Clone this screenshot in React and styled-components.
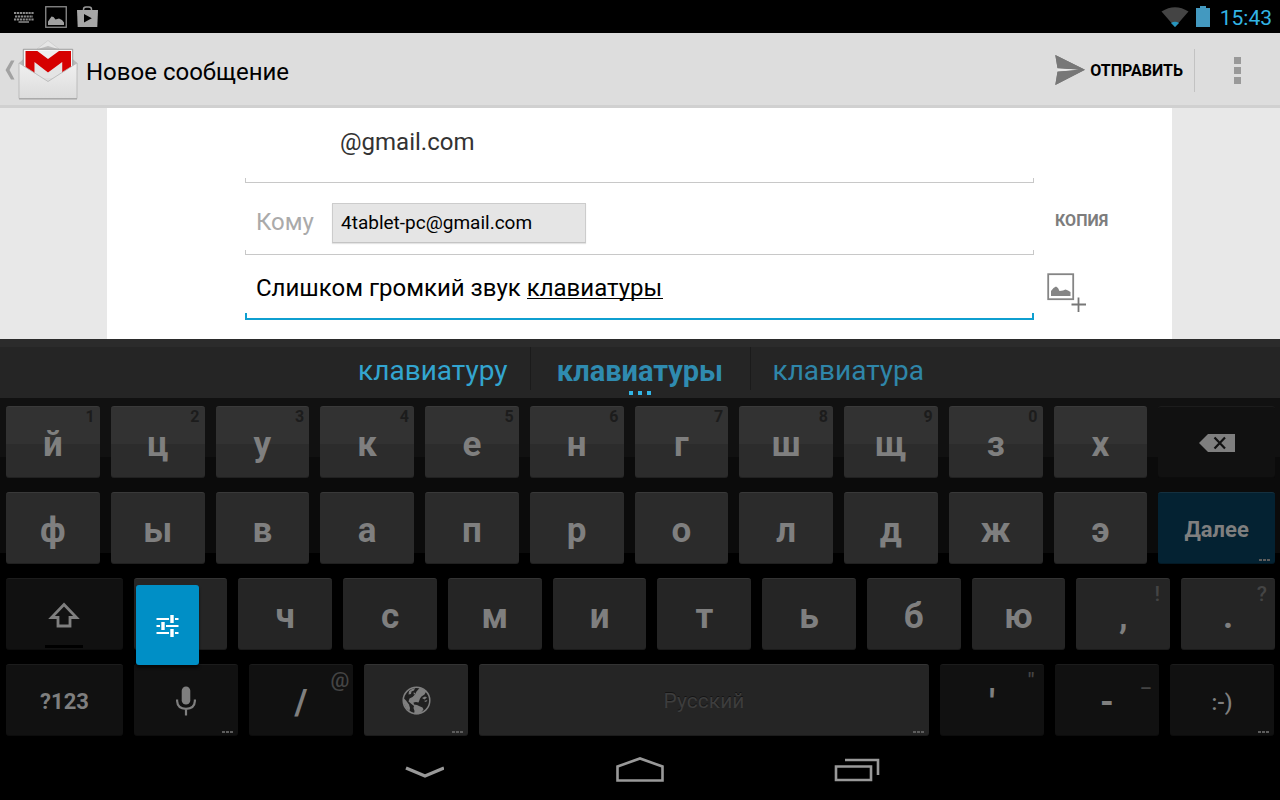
import React, { useState } from "react";
import styled, { createGlobalStyle, css } from "styled-components";

const GlobalStyle = createGlobalStyle`
  *, *::before, *::after { box-sizing: border-box; }
  body {
    margin: 0;
    background: #000;
    font-family: Roboto, "Liberation Sans", sans-serif;
    font-size: 24px;
  }
  button, input, select { font: inherit; color: inherit; }
  svg { display: block; flex: none; }
`;

const Screen = styled.div`
  display: flex;
  flex-direction: column;
  min-height: 100vh;
`;

/* Status bar */

const StatusBar = styled.header`
  display: flex;
  align-items: center;
  justify-content: space-between;
  height: 33px;
  padding: 0 8px 0 13px;
  background: #000;
`;

const StatusGroup = styled.div`
  display: flex;
  align-items: center;
  gap: ${(p) => p.$gap}px;
`;

const Clock = styled.time`
  padding: 2px 0 0 3px;
  color: #33b5e5;
  font-size: 21px;
  line-height: 24px;
`;

/* Action bar */

const ActionBar = styled.div`
  display: flex;
  align-items: center;
  height: 75px;
  padding: 2px 0 0 5px;
  background: #ddd;
  border-bottom: 3px solid #d0d0d0;
`;

const PlainButton = styled.button`
  display: flex;
  align-items: center;
  padding: 0;
  border: 0;
  background: none;
  cursor: pointer;
`;

const UpButton = styled(PlainButton)`
  gap: 3px;
`;

const Title = styled.h1`
  flex: 1;
  margin: 0;
  padding: 4px 0 0 8px;
  color: #000;
  font-size: 24px;
  font-weight: 400;
  line-height: 28px;
`;

const SendButton = styled(PlainButton)`
  gap: 5px;
  height: 43px;
  padding-right: 11px;
  border-right: 1px solid #c2c2c2;
  color: #000;
  font-size: 16px;
  font-weight: 700;
`;

const OverflowButton = styled(PlainButton)`
  flex-direction: column;
  justify-content: center;
  gap: 3px;
  width: 85px;
  height: 43px;
`;

const OverflowDot = styled.span`
  width: 7px;
  height: 7px;
  background: #999;
`;

/* Compose form */

const ComposeArea = styled.main`
  padding: 0 108px 0 107px;
  background: #e8e8e8;
`;

const ComposeCard = styled.form`
  display: grid;
  grid-template-columns: 1fr 138px;
  padding: 0 0 19px 138px;
  background: #fff;
`;

const Field = styled.div`
  position: relative;
  display: flex;
  align-items: center;
  height: ${(p) => p.$height}px;
  padding: 0 11px;

  &::after {
    content: "";
    position: absolute;
    inset: auto 0 0 0;
    height: ${(p) => (p.$focused ? 7 : 5)}px;
    border: solid ${(p) => (p.$focused ? "#0f9fd0" : "#c8c8c8")};
    border-width: ${(p) => (p.$focused ? "0 2px 2px" : "0 1px 1px")};
    pointer-events: none;
  }
`;

const AccountSelect = styled.select`
  width: 100%;
  height: 40px;
  padding: 0 0 0 84px;
  margin-bottom: 8px;
  appearance: none;
  border: 0;
  outline: 0;
  background: none;
  color: #333;
`;

const FieldLabel = styled.label`
  width: 76px;
  padding-top: 6px;
  color: #aaa;
`;

const Chip = styled.span`
  width: 254px;
  height: 40px;
  margin-top: 8px;
  padding: 0 8px;
  border: 1px solid #ccc;
  border-bottom-color: #c4c4c4;
  background: #e5e5e5;
  box-shadow: 0 1px 1px #e4e4e4;
  color: #000;
  font-size: 19px;
  line-height: 38px;
`;

const TextInput = styled.input`
  flex: 1;
  min-width: 0;
  height: 40px;
  padding: 0;
  border: 0;
  outline: 0;
  background: none;
  color: #000;
`;

const ComposingUnderline = styled.span`
  position: absolute;
  left: 282px;
  top: 43px;
  width: 136px;
  height: 1px;
  background: #000;
`;

const SideCell = styled.div`
  display: flex;
  align-items: center;
  padding: ${(p) => p.$drop}px 0 0 ${(p) => p.$inset}px;
`;

const CopyButton = styled(PlainButton)`
  color: #7d7d7d;
  font-size: 16px;
  font-weight: 700;
`;

/* Suggestions */

const SuggestionStrip = styled.div`
  display: grid;
  grid-template-columns: 1fr 221px 1fr;
  height: 59px;
  padding-bottom: 8px;
  background: #252525;
  border-top: 8px solid #2b2b2b;
`;

const Suggestion = styled(PlainButton)`
  position: relative;
  justify-content: ${(p) => p.$align};
  padding: 4px 22px 0;
  border: solid #1b1b1b;
  border-width: ${(p) => (p.$main ? "0 1px" : "0")};
  color: ${(p) => p.$color};
  font-size: ${(p) => (p.$main ? 29 : 28)}px;
  font-weight: ${(p) => (p.$main ? 700 : 400)};
  line-height: 32px;
`;

const MoreSuggestions = styled.span`
  position: absolute;
  inset: auto 0 -5px 0;
  display: flex;
  justify-content: center;
  gap: 5px;

  i { width: 4px; height: 4px; background: #33b5e5; }
`;

/* Keyboard */

const Keyboard = styled.section`
  display: flex;
  flex-direction: column;
  gap: 14px;
  padding: 8px 5px 6px 6px;
  background: linear-gradient(#111 0 59px, #0b0b0b 59px 155px, #000 155px);
`;

const KeyRow = styled.div`
  display: flex;
  gap: 11px;
  height: 72px;

  &:last-child { padding-right: 1px; }
`;

const KeyCell = styled.div`
  position: relative;
  display: flex;
  flex: ${(p) => p.$size} 1 0;
  min-width: 0;
`;

const tones = {
  glossy: css`
    background: linear-gradient(#323232 0 37px, #2c2c2c 37px);
    border-top-color: #3a3a3a;
  `,
  letter: css`
    background: #2b2b2b;
    border-top-color: #393939;
  `,
  low: css`
    background: #252525;
    border-top-color: #333;
  `,
  dark: css`
    background: #111;
    border-top-color: #1c1c1c;
  `,
  action: css`
    background: #042232;
    border-top-color: #14303f;
  `,
};

const sizes = {
  letter: css`font-size: 35px; font-weight: 700; padding-top: 3px;`,
  label: css`font-size: 22px; font-weight: 700; padding-top: 2px;`,
  smiley: css`font-size: 22px; font-weight: 500; padding-top: 3px;`,
  space: css`
    font-size: 21px;
    font-weight: 400;
    color: #3d3d3d;
    text-shadow: 0 -1px 0 #141414;
  `,
};

const KeyButton = styled.button`
  display: flex;
  align-items: center;
  justify-content: center;
  flex: 1;
  min-width: 0;
  padding: 0;
  border: 0 solid;
  border-top-width: 1px;
  border-radius: 3px;
  box-shadow: inset 0 -1px 0 rgba(0, 0, 0, 0.25);
  color: #7f7f7f;
  cursor: pointer;
  ${(p) => tones[p.$tone]}
  ${(p) => sizes[p.$text]}
`;

const DigitHint = styled.span`
  position: absolute;
  top: 2px;
  right: 5px;
  color: #1c1c1c;
  font-size: 16px;
  font-weight: 700;
  line-height: 18px;
  pointer-events: none;
`;

const SymbolHint = styled(DigitHint)`
  right: 0;
  width: 26px;
  color: #444;
  font-size: 21px;
  font-weight: 500;
  line-height: 28px;
  text-align: center;
`;

const MoreMark = styled.span`
  position: absolute;
  right: 5px;
  bottom: 3px;
  display: flex;
  gap: 1px;
  pointer-events: none;

  i { width: 3px; height: 2px; background: #5c5c5c; }
`;

const ShiftMark = styled.span`
  position: absolute;
  left: 50%;
  bottom: 2px;
  width: 38px;
  height: 3px;
  margin-left: -19px;
  background: #000;
`;

const SettingsPopup = styled.button`
  position: absolute;
  z-index: 1;
  top: 7px;
  left: 2px;
  display: flex;
  align-items: center;
  justify-content: center;
  width: 63px;
  height: 80px;
  padding: 0;
  border: 0;
  border-radius: 3px;
  background: #008fc6;
  box-shadow: 0 3px 3px rgba(0, 0, 0, 0.6);
`;

/* Navigation bar */

const NavBar = styled.nav`
  display: flex;
  align-items: center;
  justify-content: center;
  gap: 120px;
  height: 58px;
  background: #000;
`;

const NavButton = styled(PlainButton)`
  justify-content: center;
  width: 96px;
  height: 48px;
`;

/* Drawings */

const KeyboardIcon = () => (
  <svg width="22" height="12" viewBox="0 0 22 12" stroke="#8c8c8c" strokeWidth="2" fill="none">
    <path d="M1 2H21M2 5.500H20M1 8.500H21" strokeDasharray="2.200 0.700" />
    <path d="M5.500 11H16" strokeWidth="1.500" />
  </svg>
);

const PictureIcon = () => (
  <svg width="22" height="22" viewBox="0 0 22 22">
    <rect x="0.750" y="0.750" width="20.500" height="20.500" fill="none" stroke="#8c8c8c" strokeWidth="1.300" />
    <path d="M3 19V15.500L6.500 10.500L8.500 11L10.500 13.500L14 12.500L17 14L19 16.500V19Z" fill="#a0a0a0" />
  </svg>
);

const PlayStoreIcon = () => (
  <svg width="21" height="22" viewBox="0 0 21 22">
    <path d="M6.500 5V3.500Q6.500 1 9 1H12Q14.500 1 14.500 3.500V5" fill="none" stroke="#999" strokeWidth="1.500" />
    <path d="M0 4H21L20.300 21H0.700Z" fill="#a6a6a6" />
    <path d="M7 8V16.500L14.800 12.300Z" fill="#000" />
  </svg>
);

const WifiIcon = () => (
  <svg width="28" height="20" viewBox="0 0 28 20">
    <path d="M0.500 4.500Q14 -4 27.500 4.500L14 20Z" fill="#444" />
    <path d="M10 16Q14 13.500 18 16L14 20Z" fill="#2795bd" />
  </svg>
);

const BatteryIcon = () => (
  <svg width="14" height="21" viewBox="0 0 14 21">
    <path d="M4 0H10V2H14V21H0V2H4Z" fill="#4399c0" />
  </svg>
);

const UpIcon = () => (
  <svg width="10" height="20" viewBox="0 0 10 20">
    <path d="M6 0.500H9.500L4.500 10L9.500 19.500H6L0.500 10Z" fill="#a2a2a2" />
  </svg>
);

const GmailIcon = () => (
  <svg width="60" height="60" viewBox="0 0 60 60">
    <defs>
      <linearGradient id="envelope" x1="0" y1="0" x2="0" y2="1">
        <stop offset="0" stopColor="#f0f0f0" />
        <stop offset="1" stopColor="#dcdcdc" />
      </linearGradient>
    </defs>
    <path d="M19 9L30 0.500L41 9Z" fill="#e6e6e6" stroke="#c4c4c4" strokeWidth="0.600" />
    <path d="M20 9L30 6L40 9Z" fill="#bdbdbd" />
    <path d="M1 23L6 18.500H54L59.300 23V30H1Z" fill="#b8b8b8" />
    <path d="M5.300 9.300H54.700V36H5.300Z" fill="#f6f6f6" stroke="#888" strokeWidth="0.800" />
    <path d="M19 11H41L30 19Z" fill="#eee" />
    <path d="M16.500 19L30 32.500L44 19V38H16.500Z" fill="#e4e4e4" />
    <path d="M7.500 11H19.300L30 19L41 11H53V36H44.200V22L30 32.500L16.500 22V36H7.500Z" fill="#d60000" />
    <path d="M1 23L30 41.500L59 23V58.500H1Z" fill="url(#envelope)" stroke="#b4b4b4" strokeWidth="0.800" />
    <path d="M1 58.800H59" stroke="#a5a5a5" strokeWidth="1.200" />
  </svg>
);

const SendIcon = () => (
  <svg width="30" height="30" viewBox="0 0 30 30">
    <path d="M0.300 0L30 14.800L0.300 30L2.500 17L22 14.800L2.500 13Z" fill="#777" />
    <path d="M2.500 13.600L24 14.800L2.500 16Z" fill="#e8e8e8" />
    <path d="M0.300 0L30 14.800L2.500 13.200ZM0.300 30L30 14.800L2.500 16.400Z" fill="#777" />
  </svg>
);

const AttachPictureIcon = () => (
  <svg width="40" height="40" viewBox="0 0 40 40">
    <rect x="1.200" y="1.200" width="25" height="25" fill="none" stroke="#858585" strokeWidth="1.800" />
    <path d="M4 23V18L6.500 15L9 13.500L11 15L12.500 18L16 17.500L18.500 16.500L21 17.500L23.500 19V23Z" fill="#858585" />
    <path d="M24.500 31.500H39M31.500 24.500V39" stroke="#777" strokeWidth="1.800" />
  </svg>
);

const BackspaceIcon = () => (
  <svg width="36" height="18" viewBox="0 0 36 18">
    <path d="M0 9L9 0H36V18H9Z" fill="#7f7f7f" />
    <path d="M15.500 3.500L26 14.500M26 3.500L15.500 14.500" stroke="#111" strokeWidth="2.200" />
  </svg>
);

const ShiftIcon = () => (
  <svg width="32" height="26" viewBox="0 0 32 26">
    <path d="M16 2.500L28.500 15.500H22V24H10V15.500H3.500Z" fill="none" stroke="#7f7f7f" strokeWidth="2.800" />
  </svg>
);

const MicIcon = () => (
  <svg width="20" height="30" viewBox="0 0 20 30">
    <rect x="5.700" y="0.500" width="8.600" height="18" rx="4.300" fill="#7f7f7f" />
    <path d="M1.100 13.500V15Q1.500 22.700 10 22.900Q18.500 22.700 18.900 15V13.500M10 23V29.500" fill="none" stroke="#7f7f7f" strokeWidth="2.200" />
  </svg>
);

const GlobeIcon = () => (
  <svg width="29" height="29" viewBox="0 0 29 29">
    <circle cx="14.500" cy="14.500" r="13.300" fill="#202020" stroke="#7f7f7f" strokeWidth="1.500" />
    <path d="M18 1.500L24.500 5L22.500 8.500L19.500 10.500L18 12.500L17.500 14L16.500 16.500L14 16L11.500 16.500L12 18.500L15 19L17 20L20.500 21.500L21.500 23.500L19.500 26L17 28.300H12L12.500 25L11.500 22L12 20L9.500 18L6.500 15.500L7.500 12.500L10.500 11L13 8.500L14.500 5.500Z" fill="#7f7f7f" />
    <path d="M1.500 12L4 14.500L7 18.500L8 22L7.500 25L4 22L1.500 17Z" fill="#7f7f7f" />
    <path d="M7 5L10 3L13 2L12 4.500L9.500 5.500L9 8L6.500 8.500ZM11.500 6.500L13.500 7L12 9ZM20 12L23 10.500L25 11.500L22.500 13.500ZM22 15L25.500 14L24 16Z" fill="#7f7f7f" />
  </svg>
);

const SettingsIcon = () => (
  <svg width="23" height="23" viewBox="0 0 23 23" stroke="#fff" fill="none">
    <path d="M0.500 5H13M19 5H22.500M0.500 12H4M10 12H22.500M0.500 19H13M19 19H22.500" strokeWidth="1.800" />
    <path d="M16 1V9M7 8V16M16 15V23" strokeWidth="3.400" />
  </svg>
);

const HideIcon = () => (
  <svg width="40" height="16" viewBox="0 0 40 16">
    <path d="M2 5L21 13L40 5" fill="none" stroke="#999" strokeWidth="3.400" />
  </svg>
);

const HomeIcon = () => (
  <svg width="48" height="28" viewBox="0 0 48 28">
    <path d="M1.500 9.500L24 1.500L46.500 9.500V23.500H1.500Z" fill="none" stroke="#999" strokeWidth="2.600" />
  </svg>
);

const RecentsIcon = () => (
  <svg width="48" height="26" viewBox="0 0 48 26" fill="none" stroke="#999" strokeWidth="2.600">
    <path d="M4 8.500H39V22H4Z" />
    <path d="M13 2H46V17" />
  </svg>
);

const Dots = () => (<><i /><i /><i /></>);

/* Key data */

const letters = (text, tone, hints = "") =>
  [...text].map((label, i) => ({ label, tone, text: "letter", size: 94, digit: hints[i] }));

const rows = [
  [
    ...letters("йцукенгшщзх", "glossy", "1234567890"),
    { name: "Удалить", icon: <BackspaceIcon />, tone: "dark", size: 117 },
  ],
  [
    ...letters("фывапролджэ", "letter"),
    { label: "Далее", tone: "action", text: "label", size: 117, more: true },
  ],
  [
    { name: "Shift", icon: <ShiftIcon />, tone: "dark", size: 117, shift: true },
    { name: "я", tone: "low", size: 94, popup: true },
    ...letters("чсмитьбю", "low"),
    { label: ",", tone: "low", text: "letter", size: 94, symbol: "!" },
    { label: ".", tone: "low", text: "letter", size: 94, symbol: "?" },
  ],
  [
    { label: "?123", tone: "dark", text: "label", size: 117 },
    { name: "Голосовой ввод", icon: <MicIcon />, tone: "dark", size: 104, more: true },
    { label: "/", tone: "dark", text: "letter", size: 104, symbol: "@" },
    { name: "Сменить язык", icon: <GlobeIcon />, tone: "low", size: 104, more: true },
    { label: "Русский", tone: "low", text: "space", size: 450, more: true },
    { label: "'", tone: "dark", text: "letter", size: 104, symbol: '"' },
    { label: "-", tone: "dark", text: "letter", size: 104, symbol: "_" },
    { label: ":-)", tone: "dark", text: "smiley", size: 104, more: true },
  ],
];

const Key = ({ label, name, icon, tone, text, size, digit, symbol, more, shift, popup }) => (
  <KeyCell $size={size}>
    <KeyButton type="button" $tone={tone} $text={text} aria-label={name}>
      {icon || label}
    </KeyButton>
    {digit && <DigitHint>{digit}</DigitHint>}
    {symbol && <SymbolHint>{symbol}</SymbolHint>}
    {more && <MoreMark><Dots /></MoreMark>}
    {shift && <ShiftMark />}
    {popup && (
      <SettingsPopup type="button" aria-label="Настройки клавиатуры">
        <SettingsIcon />
      </SettingsPopup>
    )}
  </KeyCell>
);

export default function App() {
  const [subject, setSubject] = useState("Слишком громкий звук клавиатуры");

  return (
    <Screen>
      <GlobalStyle />
      <StatusBar>
        <StatusGroup $gap={10}>
          <KeyboardIcon />
          <PictureIcon />
          <PlayStoreIcon />
        </StatusGroup>
        <StatusGroup $gap={7}>
          <WifiIcon />
          <BatteryIcon />
          <Clock>15:43</Clock>
        </StatusGroup>
      </StatusBar>

      <ActionBar>
        <UpButton type="button" aria-label="Назад">
          <UpIcon />
          <GmailIcon />
        </UpButton>
        <Title>Новое сообщение</Title>
        <SendButton type="submit" form="compose">
          <SendIcon />
          ОТПРАВИТЬ
        </SendButton>
        <OverflowButton type="button" aria-label="Ещё">
          <OverflowDot />
          <OverflowDot />
          <OverflowDot />
        </OverflowButton>
      </ActionBar>

      <ComposeArea>
        <ComposeCard id="compose" onSubmit={(e) => e.preventDefault()}>
          <Field $height={75}>
            <AccountSelect aria-label="От">
              <option>@gmail.com</option>
            </AccountSelect>
          </Field>
          <SideCell $inset={0} $drop={0} />
          <Field $height={72}>
            <FieldLabel htmlFor="to">Кому</FieldLabel>
            <Chip>4tablet-pc@gmail.com</Chip>
            <TextInput id="to" type="text" />
          </Field>
          <SideCell $inset={21} $drop={2}>
            <CopyButton type="button">КОПИЯ</CopyButton>
          </SideCell>
          <Field $height={65} $focused>
            <TextInput
              type="text"
              aria-label="Тема"
              value={subject}
              onChange={(e) => setSubject(e.target.value)}
            />
            <ComposingUnderline />
          </Field>
          <SideCell $inset={13} $drop={10}>
            <PlainButton type="button" aria-label="Прикрепить изображение">
              <AttachPictureIcon />
            </PlainButton>
          </SideCell>
        </ComposeCard>
      </ComposeArea>

      <SuggestionStrip>
        <Suggestion type="button" $align="flex-end" $color="#33a5d0">клавиатуру</Suggestion>
        <Suggestion type="button" $align="center" $color="#2f8bb0" $main>
          клавиатуры
          <MoreSuggestions><Dots /></MoreSuggestions>
        </Suggestion>
        <Suggestion type="button" $align="flex-start" $color="#2f86a9">клавиатура</Suggestion>
      </SuggestionStrip>

      <Keyboard aria-label="Клавиатура">
        {rows.map((keys, i) => (
          <KeyRow key={i}>
            {keys.map((key) => (
              <Key key={key.label || key.name} {...key} />
            ))}
          </KeyRow>
        ))}
      </Keyboard>

      <NavBar>
        <NavButton type="button" aria-label="Скрыть клавиатуру"><HideIcon /></NavButton>
        <NavButton type="button" aria-label="Главный экран"><HomeIcon /></NavButton>
        <NavButton type="button" aria-label="Недавние приложения"><RecentsIcon /></NavButton>
      </NavBar>
    </Screen>
  );
}
